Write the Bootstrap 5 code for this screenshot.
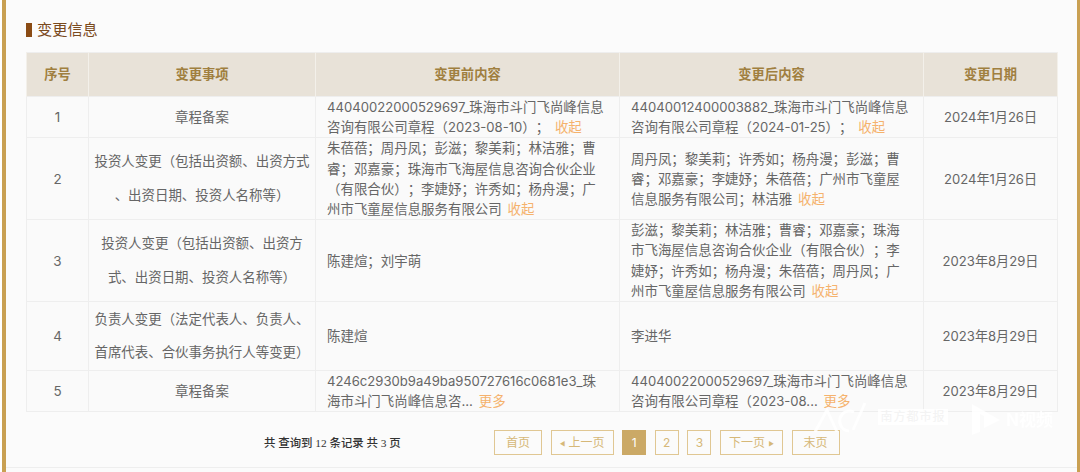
<!doctype html>
<html lang="zh">
<head>
<meta charset="utf-8">
<title>变更信息</title>
<link rel="stylesheet" href="https://cdn.jsdelivr.net/npm/bootstrap@5.3.0/dist/css/bootstrap.min.css">
<style>
html,body{height:472px;overflow:hidden;background:#fff}
body{font-family:Inter,"Noto Sans CJK SC",sans-serif;color:#666;text-spacing-trim:space-all}
.frame{height:472px;margin-left:2px;border-left:4px solid #c9a052;border-right:3px solid #c9a052;background:#fbfbfb;position:relative}
.inner{height:468px;border-bottom:1px solid #eee;padding:20px 20px 0 20px}
.sect-title{font-size:15.2px;line-height:20px;color:#7a4a1e;height:32px;align-items:flex-start;gap:5px}
.sect-title i{display:inline-block;width:6px;height:14px;background:#8a4b14;margin-top:3px}
.chg-table{table-layout:fixed;width:1031px;margin:0;border-color:#eeeeee;font-size:13.45px;--bs-table-bg:transparent;--bs-table-color:#666}
.chg-table th{background:#e8e2d8;color:#a07f3f;font-weight:700;height:44px;text-align:center;vertical-align:middle;padding:0;font-size:13.3px;border-color:#f3f0ea}
.chg-table td{padding:0 11px;vertical-align:middle;line-height:20.2px;color:#666;background:#fafafa}
.chg-table td.mid{text-align:center;padding:0 4px}
.chg-table td.dt{font-size:13.1px}
.chg-table td.tall{line-height:33.4px;padding:0 5px;text-align:center}
.lat{font-size:13.1px}
.r-a{height:40px}.r-b{height:81px}.r-c{height:69px}
.more-lnk{color:#f5b26d;text-decoration:none;margin-left:2px}
.pager-row{margin-top:18px;height:25px}
.pager-note{font-family:"Liberation Serif","Noto Sans CJK SC",serif;font-size:11.4px;color:#333;font-weight:500;width:468px;padding:0 0 0 238px;line-height:28px;white-space:nowrap}
.pg{height:25px;border:1px solid #e0c793;color:#d6b878;font-size:12px;line-height:23px;padding:0;text-align:center;background:transparent;border-radius:0;text-decoration:none;--bs-btn-font-size:12px}
.pg.on{background:#cba966;border-color:#cba966;color:#fff}
.pg-gap{gap:8.6px}
.w-a{width:48px}.w-b{width:63px}.w-c{width:24px}
.tri{font-size:6px;vertical-align:1px}
.wm{position:absolute;left:807px;top:402px;width:255px;height:34px;color:#fff;opacity:.85}
.wm-box{position:absolute;left:65px;top:7px;width:70px;height:16px;background:#fff;color:#f1f1f1;font-size:12px;line-height:16px;text-align:center;white-space:nowrap;overflow:hidden;letter-spacing:1px}
.wm-txt{position:absolute;left:193px;top:9px;font-size:17px;line-height:19px;font-weight:700;white-space:nowrap}
</style>
</head>
<body>
<div class="frame">
  <div class="inner">
    <div class="sect-title d-flex"><i></i><span>变更信息</span></div>
    <table class="table table-bordered chg-table">
      <colgroup><col style="width:62px"><col style="width:227px"><col style="width:304px"><col style="width:304px"><col style="width:134px"></colgroup>
      <thead><tr><th>序号</th><th>变更事项</th><th>变更前内容</th><th>变更后内容</th><th>变更日期</th></tr></thead>
      <tbody>
        <tr class="r-a"><td class="mid">1</td><td class="mid">章程备案</td>
          <td><span class="lat">44040022000529697_</span>珠海市斗门飞尚峰信息咨询有限公司章程（<span class="lat">2023-08-10</span>）； <a class="more-lnk" href="#">收起</a></td>
          <td><span class="lat">44040012400003882_</span>珠海市斗门飞尚峰信息咨询有限公司章程（<span class="lat">2024-01-25</span>）； <a class="more-lnk" href="#">收起</a></td>
          <td class="mid dt">2024年1月26日</td></tr>
        <tr class="r-b"><td class="mid">2</td><td class="tall">投资人变更（包括出资额、出资方式<br>、出资日期、投资人名称等）</td>
          <td>朱蓓蓓；周丹凤；彭滋；黎美莉；林洁雅；曹睿；邓嘉豪；珠海市飞海屋信息咨询合伙企业（有限合伙）；李婕妤；许秀如；杨舟漫；广州市飞童屋信息服务有限公司 <a class="more-lnk" href="#">收起</a></td>
          <td>周丹凤；黎美莉；许秀如；杨舟漫；彭滋；曹睿；邓嘉豪；李婕妤；朱蓓蓓；广州市飞童屋信息服务有限公司；林洁雅 <a class="more-lnk" href="#">收起</a></td>
          <td class="mid dt">2024年1月26日</td></tr>
        <tr class="r-b"><td class="mid">3</td><td class="tall">投资人变更（包括出资额、出资方<br>式、出资日期、投资人名称等）</td>
          <td>陈建煊；刘宇萌</td>
          <td>彭滋；黎美莉；林洁雅；曹睿；邓嘉豪；珠海市飞海屋信息咨询合伙企业（有限合伙）；李婕妤；许秀如；杨舟漫；朱蓓蓓；周丹凤；广州市飞童屋信息服务有限公司 <a class="more-lnk" href="#">收起</a></td>
          <td class="mid dt">2023年8月29日</td></tr>
        <tr class="r-c"><td class="mid">4</td><td class="tall">负责人变更（法定代表人、负责人、<br>首席代表、合伙事务执行人等变更）</td>
          <td>陈建煊</td><td>李进华</td><td class="mid dt">2023年8月29日</td></tr>
        <tr class="r-a"><td class="mid">5</td><td class="mid">章程备案</td>
          <td><span class="lat">4246c2930b9a49ba950727616c0681e3_</span>珠海市斗门飞尚峰信息咨... <a class="more-lnk" href="#">更多</a></td>
          <td><span class="lat">44040022000529697_</span>珠海市斗门飞尚峰信息咨询有限公司章程（<span class="lat">2023-08...</span> <a class="more-lnk" href="#">更多</a></td>
          <td class="mid dt">2023年8月29日</td></tr>
      </tbody>
    </table>
    <div class="pager-row d-flex align-items-center">
      <div class="pager-note">共 查询到 12 条记录 共 3 页</div>
      <div class="d-flex pg-gap">
        <a class="btn pg w-a" href="#">首页</a>
        <a class="btn pg w-b" href="#"><span class="tri">◀</span> 上一页</a>
        <a class="btn pg on w-c" href="#">1</a>
        <a class="btn pg w-c" href="#">2</a>
        <a class="btn pg w-c" href="#">3</a>
        <a class="btn pg w-b" href="#">下一页 <span class="tri">▶</span></a>
        <a class="btn pg w-a" href="#">末页</a>
      </div>
    </div>
  </div>
  <div class="wm">
    <svg width="60" height="34" viewBox="0 0 60 34" class="position-absolute top-0 start-0"><path d="M2 30 L14 8 L24 30 M52 1 L40 28" fill="none" stroke="#fff" stroke-width="3"/><path d="M41 10 A10 10 0 1 0 36 29" fill="none" stroke="#fff" stroke-width="3"/></svg>
    <div class="wm-box">南方都市报</div>
    <svg width="32" height="34" viewBox="0 0 32 34" class="position-absolute" style="left:157px;top:0"><path d="M2 2 L30 18 L14 26 V14 L10 12 V30 L2 33 Z" fill="#fff"/></svg>
    <div class="wm-txt">N视频</div>
  </div>
</div>
</body>
</html>
